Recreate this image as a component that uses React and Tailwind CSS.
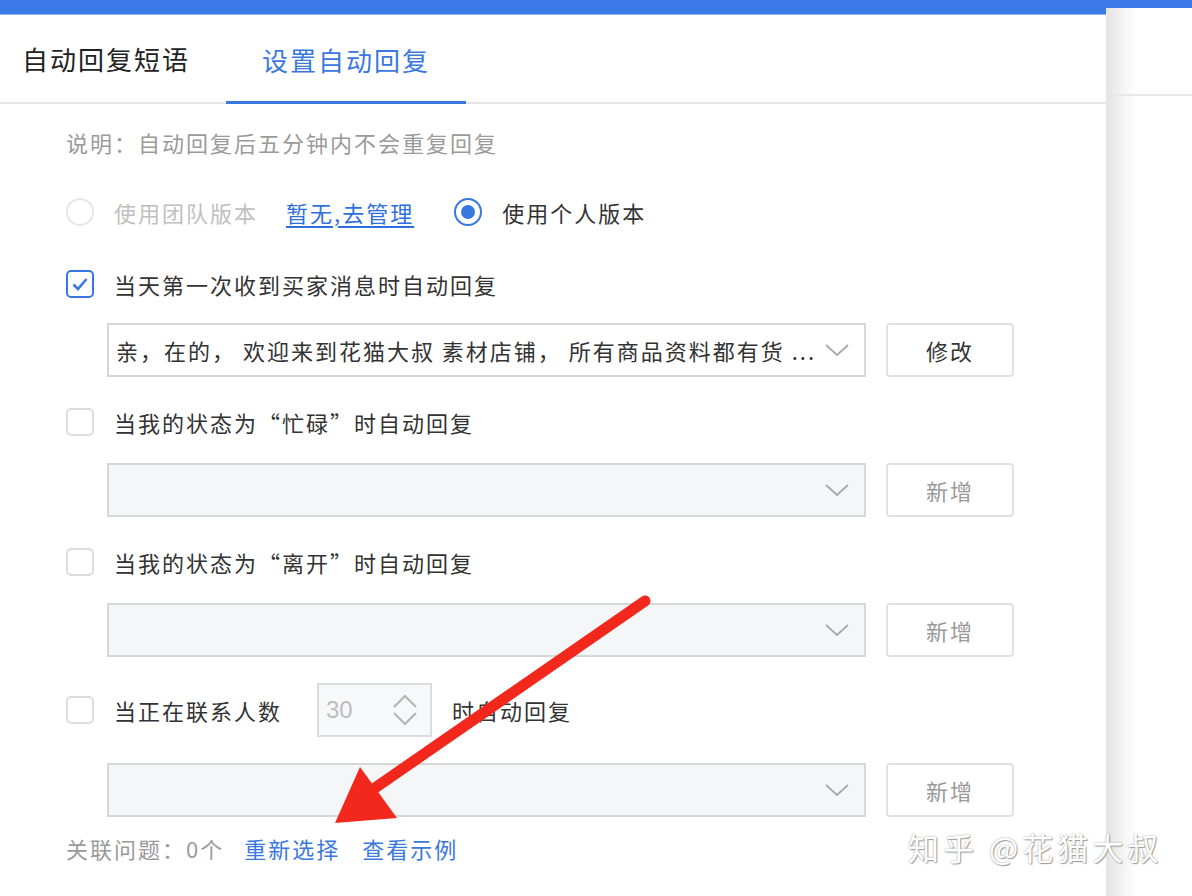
import React from 'react';

const font = { fontFamily: '"Noto Sans CJK SC", "Noto Sans", sans-serif' };

const Chevron = ({ className = '' }) => (
  <svg viewBox="0 0 26 16" className={className} fill="none" stroke="currentColor" strokeWidth="1.8">
    <path d="M2 3 L13 13 L24 3" />
  </svg>
);

const Checkbox = ({ checked }) => (
  <div
    className={`w-[28px] h-[28px] rounded-[5px] border-2 flex items-center justify-center shrink-0 bg-white ${
      checked ? 'border-[#3a78e0]' : 'border-[#dcdcdc]'
    }`}
  >
    {checked && (
      <svg viewBox="0 0 20 20" className="w-[20px] h-[20px]" fill="none" stroke="#3a78e0" strokeWidth="2.6">
        <path d="M3.5 10.5 L8 15 L16.5 5" />
      </svg>
    )}
  </div>
);

const Radio = ({ checked }) => (
  <div
    className={`w-[28px] h-[28px] rounded-full border-2 flex items-center justify-center shrink-0 ${
      checked ? 'border-[#3a78e0]' : 'border-[#e6e6e6]'
    }`}
  >
    {checked && <div className="w-[14px] h-[14px] rounded-full bg-[#3a78e0]" />}
  </div>
);

const CheckRow = ({ checked, children, className = '' }) => (
  <div className={`flex items-center h-[40px] ${className}`}>
    <Checkbox checked={checked} />
    <span className="ml-[20px] text-[22px] tracking-[2px] text-[#333]">{children}</span>
  </div>
);

const SelectRow = ({ text, button, disabled, className = '' }) => (
  <div className={`flex items-center ml-[41px] ${className}`}>
    <div
      className={`w-[759px] h-[54px] border-2 border-[#d6d6d6] flex items-center pl-[7px] pr-[14px] ${
        disabled ? 'bg-[#f5f6f8]' : 'bg-white'
      }`}
    >
      <span className="flex-1 text-[22px] tracking-[2px] text-[#333] whitespace-nowrap overflow-hidden">{text}</span>
      <Chevron className="w-[26px] h-[16px] text-[#a8a8a8] ml-[8px]" />
    </div>
    <div
      className={`ml-[20px] w-[128px] h-[54px] border-2 border-[#e2e2e2] rounded-[4px] bg-white flex items-center justify-center text-[22px] tracking-[2px] ${
        disabled ? 'text-[#999]' : 'text-[#333]'
      }`}
    >
      {button}
    </div>
  </div>
);

export default function App() {
  return (
    <div className="relative w-[1192px] h-[896px] overflow-hidden bg-white flex" style={font}>
      {/* main panel */}
      <div className="w-[1106px] flex flex-col">
        <div className="h-[15px] bg-[#3b79e7] border-b border-[#8fb2f2]" />
        <div className="h-[89px] flex items-end border-b-2 border-[#e6e6e6]">
          <div className="h-full flex items-center pl-[22px] pr-[36px] text-[26px] tracking-[2px] text-[#222]">自动回复短语</div>
          <div className="h-full w-[240px] flex items-center justify-center text-[26px] tracking-[2px] text-[#3a78e0] border-b-[3px] border-[#3a78e0] -mb-[2px]">
            设置自动回复
          </div>
        </div>

        <div className="pl-[66px] flex flex-col">
          <div className="mt-[18px] h-[40px] flex items-center text-[22px] tracking-[2px] text-[#9a9a9a]">
            说明：自动回复后五分钟内不会重复回复
          </div>

          <div className="mt-[30px] h-[40px] flex items-center text-[22px] tracking-[2px]">
            <Radio />
            <span className="ml-[20px] text-[#c0c0c0]">使用团队版本</span>
            <span className="ml-[28px] text-[#2d6fdc] underline underline-offset-4">暂无,去管理</span>
            <div className="ml-[40px]">
              <Radio checked />
            </div>
            <span className="ml-[20px] text-[#333]">使用个人版本</span>
          </div>

          <CheckRow checked className="mt-[32px]">当天第一次收到买家消息时自动回复</CheckRow>
          <SelectRow
            className="mt-[19px]"
            text="亲，在的， 欢迎来到花猫大叔 素材店铺， 所有商品资料都有货 ..."
            button="修改"
          />

          <CheckRow className="mt-[25px]">当我的状态为“忙碌”时自动回复</CheckRow>
          <SelectRow className="mt-[21px]" disabled button="新增" />

          <CheckRow className="mt-[25px]">当我的状态为“离开”时自动回复</CheckRow>
          <SelectRow className="mt-[21px]" disabled button="新增" />

          <div className="mt-[26px] h-[54px] flex items-center text-[22px] tracking-[2px]">
            <Checkbox />
            <span className="ml-[20px] text-[#333]">当正在联系人数</span>
            <div className="ml-[35px] w-[115px] h-[54px] border-2 border-[#dcdcdc] bg-[#f7f8fa] flex items-center pl-[7px] pr-[12px]">
              <span className="flex-1 text-[24px] tracking-normal text-[#bdbdbd]" style={{ fontFamily: '"Liberation Sans", sans-serif' }}>
                30
              </span>
              <svg viewBox="0 0 26 34" className="w-[26px] h-[34px]" fill="none" stroke="#b5b5b5" strokeWidth="2.2">
                <path d="M2 14 L13 3 L24 14" />
                <path d="M2 20 L13 31 L24 20" />
              </svg>
            </div>
            <span className="ml-[20px] text-[#333]">时自动回复</span>
          </div>
          <SelectRow className="mt-[26px]" disabled button="新增" />

          <div className="mt-[11px] h-[40px] flex items-center text-[22px] tracking-[2px]">
            <span className="text-[#9a9a9a]">关联问题：0个</span>
            <span className="ml-[20px] text-[#3a78e0]">重新选择</span>
            <span className="ml-[22px] text-[#3a78e0]">查看示例</span>
          </div>
        </div>
      </div>

      {/* side window */}
      <div className="flex-1 flex flex-col">
        <div className="h-[8px] bg-[#3b79e7]" />
        <div className="flex-1 bg-linear-to-r from-[#e4e4e4] to-white to-35%">
          <div className="h-[88px] border-b-2 border-[#e8e8e8]" />
        </div>
      </div>

      {/* annotation arrow */}
      <svg className="absolute left-0 top-0 pointer-events-none" width="1192" height="896" viewBox="0 0 1192 896">
        <line x1="645" y1="601" x2="372" y2="790" stroke="#f3281d" strokeWidth="11" strokeLinecap="round" />
        <polygon points="335,823 360,767 397,818" fill="#f3281d" />
      </svg>

      {/* watermark */}
      <div
        className="absolute left-[908px] top-[824px] text-[31px] text-white tracking-[4px]"
        style={{ textShadow: '0 0 2px #9a9a9a, 1px 1px 1px #a0a0a0' }}
      >
        知乎 @花猫大叔
      </div>
    </div>
  );
}
